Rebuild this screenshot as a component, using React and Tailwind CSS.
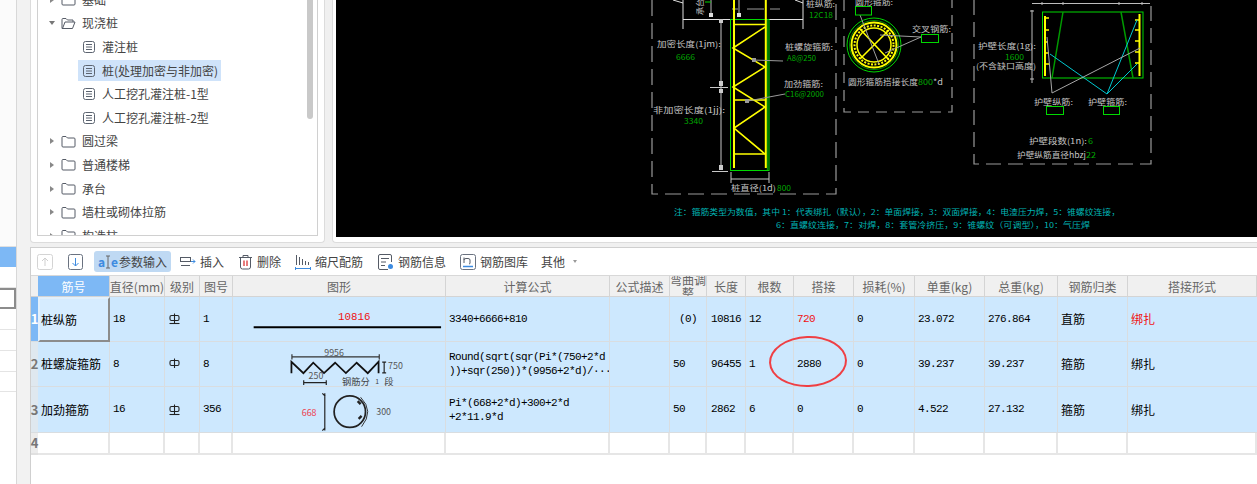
import React from 'react';

const mono = "font-['Liberation_Mono','Noto_Sans_CJK_SC',monospace] text-[11px] tracking-[-0.6px]";
const gridCols = 'grid grid-cols-[7px_72px_55px_35px_33px_213px_164px_60px_37px_39px_48px_60px_61px_70px_73px_70px_1fr]';

const FolderIcon = ({ open }) => (
  <svg width="15" height="13" viewBox="0 0 15 13" fill="none" stroke="#555b66" strokeWidth="1">
    {open ? (
      <path d="M1 11.5V2.5q0-1 1-1h3l1.5 1.5H12V5M1 11.5h10.500L14 5H4L1.500 11.500" />
    ) : (
      <path d="M1 2.500q0-1 1-1h3l1.500 1.500H13q1 0 1 1v7q0 1-1 1H2q-1 0-1-1z" />
    )}
  </svg>
);

const DocIcon = () => (
  <svg width="12" height="12" viewBox="0 0 12 12" fill="none" stroke="#5c6470" strokeWidth="1">
    <rect x="0.500" y="0.500" width="11" height="11" rx="2" />
    <path d="M3 3.500h6M3 6h6M3 8.500h6" />
  </svg>
);

const treeRows = [
  { label: '基础', level: 0, folder: true },
  { label: '现浇桩', level: 0, folder: true, open: true },
  { label: '灌注桩', level: 1 },
  { label: '桩(处理加密与非加密)', level: 1, selected: true },
  { label: '人工挖孔灌注桩-1型', level: 1 },
  { label: '人工挖孔灌注桩-2型', level: 1 },
  { label: '圆过梁', level: 0, folder: true },
  { label: '普通楼梯', level: 0, folder: true },
  { label: '承台', level: 0, folder: true },
  { label: '墙柱或砌体拉筋', level: 0, folder: true },
  { label: '构造柱', level: 0, folder: true },
];

const TreeRow = ({ row }) => {
  if (row.level === 1) {
    return (
      <div className="h-[23.6px] flex items-center pl-[40px]">
        <div className={`flex items-center h-[21px] pl-[5px] pr-[3px] gap-[7px] ${row.selected ? 'bg-[#cfe3fa]' : ''}`}>
          <DocIcon />
          <span className="text-[12px] text-[#444]">{row.label}</span>
        </div>
      </div>
    );
  }
  return (
    <div className="h-[23.6px] flex items-center pl-[11px]">
      <span className="w-[12px] flex items-center">
        {row.open ? (
          <span className="w-0 h-0 border-x-[3px] border-x-transparent border-t-[4px] border-t-[#777]" />
        ) : (
          <span className="w-0 h-0 ml-[1px] border-y-[3px] border-y-transparent border-l-[4px] border-l-[#888]" />
        )}
      </span>
      <FolderIcon open={row.open} />
      <span className="ml-[6px] text-[12px] text-[#444]">{row.label}</span>
    </div>
  );
};

const G = '#00a800';
const BRIGHT = '#00d800';
const Y = '#ffff00';
const W = '#c4c4c4';
const CY = '#00b4b4';

const Label = ({ x, y, fill = W, size = 8, len, children }) => (
  <text x={x} y={y} fill={fill} fontSize={size} textLength={len} lengthAdjust={len ? 'spacingAndGlyphs' : undefined}>
    {children}
  </text>
);

const CadDrawing = () => (
  <svg className="block w-[921px] h-[237px] bg-black" viewBox="336 0 921 237" fill="none">
    {/* dashed frames */}
    <path d="M652 0V194H836V0" stroke="#9a9a9a" strokeWidth="1.200" strokeDasharray="16 7" />
    <path d="M844 0V112H952V0" stroke="#9a9a9a" strokeWidth="1.200" strokeDasharray="11 7" />
    <path d="M974 0V164H1151V0" stroke="#9a9a9a" strokeWidth="1.200" strokeDasharray="15 7" />

    {/* pile elevation */}
    <path d="M683 29V0M803 29V0M683 19.500H803M673 0L683 3M795 0L803 3" stroke="#e0e0e0" />
    <path d="M732 9h6M747 9h17M770 9h10" stroke="#999" />
    <path d="M711 0V15M739 0V15" stroke="#bbb" />
    <rect x="709" y="13" width="4" height="4" fill="#ddd" />
    <rect x="737" y="13" width="4" height="4" fill="#ddd" />
    <path d="M705 2h6" stroke={BRIGHT} />
    <text x="703" y="15" fill={W} fontSize="8" transform="rotate(-90 703 15)">承台</text>
    <rect x="730.500" y="19.500" width="38.500" height="151" stroke={BRIGHT} />
    <path d="M767.500 20V170" stroke="#008a00" strokeWidth="1.500" />
    <path d="M734 0V168M765.800 0V168" stroke={Y} strokeWidth="2" />
    <path d="M734 24.500H765.800M734 100H765.800M734 154H765.800" stroke={Y} strokeWidth="1.500" />
    <path d="M765 27L733 48L765 67L733 87L765 107L734 128L765 154" stroke={Y} strokeWidth="1.600" />
    <path d="M721 20V170M710 87.500H728M712 171.500H728" stroke="#c8c8c8" />
    <rect x="719" y="81" width="4" height="5" fill="#ccc" />
    <rect x="719" y="89" width="4" height="4" fill="#ccc" />
    <rect x="719" y="165" width="4" height="5" fill="#ccc" />
    <rect x="719" y="19" width="4" height="4" fill="#ccc" />
    <path d="M731 172V183M769 172V183M731 179H769" stroke="#c8c8c8" />
    <path d="M753 60L783 61M748 101L785 94" stroke="#9a9a9a" />
    <rect x="752" y="58" width="4" height="4" fill="#9a9a9a" />
    <rect x="745" y="99" width="4" height="4" fill="#9a9a9a" />
    <Label x="657" y="47" len="64">加密长度(1jm):</Label>
    <Label x="676" y="60" fill={G} len="19">6666</Label>
    <Label x="653" y="113" len="72">非加密长度(1jj):</Label>
    <Label x="684" y="124" fill={G} len="19">3340</Label>
    <Label x="806" y="7" len="29">桩纵筋:</Label>
    <Label x="809" y="18" fill={G} len="24">12C18</Label>
    <Label x="785" y="50" len="48">桩螺旋箍筋:</Label>
    <Label x="787" y="61" fill={G} len="29">A8@250</Label>
    <Label x="784" y="87" len="39">加劲箍筋:</Label>
    <Label x="785" y="97" fill={G} len="39">C16@2000</Label>
    <Label x="731" y="191" len="45">桩直径(1d)</Label>
    <Label x="777" y="191" fill={G} len="14">800</Label>

    {/* circular section */}
    <circle cx="874" cy="45" r="27" stroke={BRIGHT} />
    <circle cx="874" cy="45" r="24.500" stroke="#008a00" strokeWidth="1" />
    <circle cx="874" cy="45" r="22.500" stroke={Y} strokeWidth="2" />
    <circle cx="874" cy="45" r="19.500" stroke={Y} strokeWidth="2" strokeDasharray="2 1.500" />
    <circle cx="874" cy="45" r="17" stroke={Y} strokeWidth="1.500" />
    <path d="M859 28L889 60M889 30L860 59" stroke={Y} strokeWidth="1.600" />
    <path d="M860 15L879 64M921 37L880 35M921 37L885 53" stroke="#a0a0a0" />
    <rect x="855.500" y="6.500" width="16" height="8.500" stroke={BRIGHT} />
    <rect x="921.500" y="34.500" width="17" height="8" stroke={BRIGHT} />
    <Label x="855" y="5" len="38">圆形箍筋:</Label>
    <Label x="912" y="32" len="39">交叉钢筋:</Label>
    <Label x="848" y="85" len="70">圆形箍筋搭接长度</Label>
    <Label x="918" y="85" fill={G} len="15">800</Label>
    <Label x="933" y="85" len="10">*d</Label>

    {/* wall section */}
    <path d="M1032 10V83M1030 11H1034M1030 79H1034M1032 3.500H1150M1042 2V5M1063 2V5M1119 2V5M1142 2V5" stroke="#bdbdbd" />
    <rect x="1042.500" y="12" width="100.500" height="66" stroke={BRIGHT} />
    <path d="M1063 12L1052 78M1121 12L1133 78" stroke="#009a00" strokeWidth="1.500" />
    <path d="M1045 16V76M1139.500 14V76" stroke={Y} strokeWidth="2" />
    <path d="M1045 18h4M1045 30h4M1045 42h3M1045 53h4M1045 64h4M1135 20h4M1135 30h4M1135 41h4M1135 52h4M1135 63h4" stroke={Y} strokeWidth="1.500" />
    <path d="M1107 94L1050 54M1107 94L1137 20M1107 94L1137 64" stroke="#00c8d0" />
    <path d="M1052 93L1140 48M1052 93L1047 37" stroke="#a8a8a8" />
    <rect x="1046.500" y="106.500" width="17" height="8" stroke={BRIGHT} />
    <rect x="1103.500" y="106.500" width="16" height="8" stroke={BRIGHT} />
    <Label x="978" y="49" len="58">护壁长度(1g):</Label>
    <Label x="1005" y="60" fill={G} len="19">1600</Label>
    <Label x="976" y="69" len="60">(不含缺口高度)</Label>
    <Label x="1034" y="105" len="39">护壁纵筋:</Label>
    <Label x="1088" y="105" len="39">护壁箍筋:</Label>
    <Label x="1029" y="144" len="58">护壁段数(1n):</Label>
    <Label x="1088" y="144" fill={G} len="5">6</Label>
    <Label x="1017" y="158" len="69">护壁纵筋直径hbzj</Label>
    <Label x="1086" y="158" fill={G} len="10">22</Label>

    {/* notes */}
    <Label x="674" y="215" fill={CY} len="446">注：箍筋类型为数值，其中 1：代表绑扎（默认），2：单面焊接，3：双面焊接，4：电渣压力焊，5：锥螺纹连接，</Label>
    <Label x="776" y="228" fill={CY} len="314">6：直螺纹连接，7：对焊，8：套管冷挤压，9：锥螺纹（可调型），10：气压焊</Label>
  </svg>
);

const ToolIcon = ({ children, w = 16 }) => (
  <svg width={w} height="16" viewBox={`0 0 ${w} 16`} fill="none" strokeWidth="1">
    {children}
  </svg>
);

const ToolButton = ({ icon, label, className = '' }) => (
  <div className={`flex items-center gap-[4px] text-[12px] text-[#444] ${className}`}>
    {icon}
    <span>{label}</span>
  </div>
);

const Toolbar = () => (
  <div className="h-[28px] flex items-center bg-white border-b border-[#d8d8d8] pl-[6px]">
    <ToolIcon>
      <rect x="0.500" y="0.500" width="15" height="15" rx="2" stroke="#d4d4d4" />
      <path d="M8 12V4M5 7l3-3 3 3" stroke="#cfcfcf" />
    </ToolIcon>
    <div className="ml-[15px] flex">
      <ToolIcon w={15}>
        <rect x="0.500" y="0.500" width="14" height="15" rx="2" stroke="#6a7280" />
        <path d="M7.500 4V12M4.500 9l3 3 3-3" stroke="#3d8be0" />
      </ToolIcon>
    </div>
    <div className="ml-[11px] h-[21px] w-[77px] bg-[#bfd9f3] rounded-[3px] flex items-center pl-[4px] gap-[4px] text-[12px] text-[#444]">
      <span className="flex items-center w-[17px] text-[12px] font-bold text-[#3d8be0] leading-none">
        a
        <svg width="6" height="14" viewBox="0 0 6 14" fill="none" stroke="#666" className="shrink-0">
          <path d="M1 1h4M3 1v12M1 13h4" />
        </svg>
        e
      </span>
      <span>参数输入</span>
    </div>
    <ToolButton
      className="ml-[9px]"
      label="插入"
      icon={
        <ToolIcon>
          <rect x="0.500" y="3.500" width="10" height="4" stroke="#555b66" />
          <path d="M1 11.500H10" stroke="#555b66" />
          <path d="M11 7.500h4M13 5.500l2 2-2 2" stroke="#3d8be0" />
        </ToolIcon>
      }
    />
    <ToolButton
      className="ml-[14px]"
      label="删除"
      icon={
        <ToolIcon w={15}>
          <path d="M1 3.500H14M5 3.500V1.500h5v2M2.500 3.500V13q0 2 2 2h6q2 0 2-2V3.500" stroke="#555b66" />
          <path d="M6 6.500V12M9 6.500V12" stroke="#e05050" strokeWidth="1.500" />
        </ToolIcon>
      }
    />
    <ToolButton
      className="ml-[14px]"
      label="缩尺配筋"
      icon={
        <ToolIcon>
          <path d="M1.500 1V11M4.500 3V11M7.500 5V11M10.500 7V11M13.500 8V11" stroke="#555b66" />
          <path d="M0.500 14.500H15.500M0.500 13v3M15.500 13v3" stroke="#3d8be0" />
        </ToolIcon>
      }
    />
    <ToolButton
      className="ml-[15px]"
      label="钢筋信息"
      icon={
        <ToolIcon>
          <path d="M10 15.500H2q-1.500 0-1.500-1.500V2Q0.500 0.500 2 0.500h10q1.500 0 1.500 1.500v6" stroke="#555b66" />
          <path d="M3 4.500h8M3 8h5M3 11.500h4" stroke="#555b66" />
          <circle cx="12.500" cy="12.500" r="2.500" fill="#3d8be0" />
        </ToolIcon>
      }
    />
    <ToolButton
      className="ml-[14px]"
      label="钢筋图库"
      icon={
        <ToolIcon>
          <rect x="0.500" y="0.500" width="15" height="15" rx="2" stroke="#6a7280" />
          <path d="M4 3.500V9M4 6q0-1.500 2-1.500h2q2 0 2 1.500v3q0 1-1 1" stroke="#555b66" />
          <path d="M3 12.500H13" stroke="#3d8be0" strokeWidth="1.500" />
        </ToolIcon>
      }
    />
    <div className="ml-[13px] flex items-center text-[12px] text-[#444]">
      <span>其他</span>
      <span className="ml-[8px] w-0 h-0 border-x-[2.500px] border-x-transparent border-t-[3px] border-t-[#999]" />
    </div>
  </div>
);

const headers = ['筋号', '直径(mm)', '级别', '图号', '图形', '计算公式', '公式描述', '弯曲调整', '长度', '根数', '搭接', '损耗(%)', '单重(kg)', '总重(kg)', '钢筋归类', '搭接形式'];

const GradeMark = ({ base }) => (
  <svg width="11" height="12" viewBox="0 0 11 12" fill="none" stroke="#222" strokeWidth="1.100">
    <rect x="1" y="2.500" width="9" height="5" rx="1.500" />
    <path d="M5.500 0.500V10" />
    {base && <path d="M0.500 10.500H10.500" />}
  </svg>
);

const Shape1 = () => (
  <svg className="block" width="213" height="45" viewBox="233 297 213 45" fill="none">
    <text x="337" y="320" fill="#f01010" fontSize="11" fontFamily="Liberation Mono">10816</text>
    <path d="M251 327.500H442" stroke="#000" strokeWidth="2" />
  </svg>
);

const Shape2 = () => (
  <svg className="block" width="213" height="45" viewBox="233 342 213 45" fill="none">
    <path d="M290 356.700H379M290 354V359.500M379 354V359.500" stroke="#333" strokeWidth="1.200" />
    <text x="323" y="356" fill="#555" fontSize="9">9956</text>
    <path d="M289.500 373.500V361.700L301.700 373.300L311.700 362.700L322.700 373.300L334 362.700L345 373.300L356 362.700L367.300 373.300L378.300 361.700V373.500" stroke="#111" strokeWidth="1.800" />
    <path d="M384 362V373M382 362H386M382 373H386" stroke="#222" strokeWidth="1.200" />
    <text x="388" y="369.500" fill="#555" fontSize="9">750</text>
    <path d="M302 383H325M302 380.500V385.500M325 380.500V385.500" stroke="#222" strokeWidth="1.200" />
    <text x="307" y="379" fill="#555" fontSize="9">250</text>
    <text x="341" y="385.500" fill="#444" fontSize="9.500">钢筋分</text>
    <text x="375" y="384" fill="#444" fontSize="7">1</text>
    <text x="384" y="385.500" fill="#444" fontSize="9.500">段</text>
  </svg>
);

const Shape3 = () => (
  <svg className="block" width="213" height="46" viewBox="233 387 213 46" fill="none">
    <path d="M323.500 393V431M321 393L324 396M321 431L324 428" stroke="#222" strokeWidth="1.200" />
    <text x="300" y="416" fill="#ee3b4b" fontSize="9">668</text>
    <circle cx="349" cy="411.700" r="16" stroke="#222" strokeWidth="1.800" />
    <path d="M357 401l3 3M358 419l3-3" stroke="#222" strokeWidth="2.400" />
    <path d="M360 397Q374 411 361 427" stroke="#333" />
    <text x="376" y="415" fill="#555" fontSize="9">300</text>
  </svg>
);

const rows = [
  {
    no: '1', name: '桩纵筋', dia: '18', base: true, fig: '1', shape: <Shape1 />, formula: ['3340+6666+810'],
    bend: ' (0)', len: '10816', qty: '12', lap: '720', lapRed: true, loss: '0', unit: '23.072', total: '276.864',
    type: '直筋', form: '绑扎', formRed: true, h: 'h-[45px]',
  },
  {
    no: '2', name: '桩螺旋箍筋', dia: '8', base: false, fig: '8', shape: <Shape2 />, formula: ['Round(sqrt(sqr(Pi*(750+2*d', '))+sqr(250))*(9956+2*d)/···'],
    bend: '50', len: '96455', qty: '1', lap: '2880', loss: '0', unit: '39.237', total: '39.237',
    type: '箍筋', form: '绑扎', h: 'h-[45px]',
  },
  {
    no: '3', name: '加劲箍筋', dia: '16', base: true, fig: '356', shape: <Shape3 />, formula: ['Pi*(668+2*d)+300+2*d', '+2*11.9*d'],
    bend: '50', len: '2862', qty: '6', lap: '0', loss: '0', unit: '4.522', total: '27.132',
    type: '箍筋', form: '绑扎', h: 'h-[46px]',
  },
];

const Cell = ({ children, className = '' }) => (
  <div className={`flex items-center pl-[3px] border-r border-b border-[#d9dde0] overflow-hidden whitespace-pre ${className}`}>
    {children}
  </div>
);

const TableRow = ({ row }) => {
  const first = row.no === '1';
  return (
    <div className={`${gridCols} ${row.h} bg-[#cde8fe] text-black`}>
      <div className={`flex items-center justify-center border-b border-[#d9dde0] text-[13px] font-bold ${first ? 'bg-[#7db8f5] text-white' : 'bg-[#dfe8ef] text-[#777]'}`}>
        {row.no}
      </div>
      {first ? (
        <div className="flex items-center pl-[1px] text-[12px] border-2 border-[#e2f0fc] border-r-[#8c8c8c] border-b-[#8c8c8c] bg-[#d6ecff]">{row.name}</div>
      ) : (
        <Cell className="text-[12px]">{row.name}</Cell>
      )}
      <Cell className={mono}>{row.dia}</Cell>
      <Cell className="pl-[4px]"><GradeMark base={row.base} /></Cell>
      <Cell className={mono}>{row.fig}</Cell>
      <Cell className="pl-0">{row.shape}</Cell>
      <Cell className={`${mono} leading-[14px]`}>
        <div>
          {row.formula.map((line) => (
            <div key={line}>{line}</div>
          ))}
        </div>
      </Cell>
      <Cell />
      <Cell className={mono}>{row.bend}</Cell>
      <Cell className={`${mono} pl-[4px]`}>{row.len}</Cell>
      <Cell className={mono}>{row.qty}</Cell>
      <Cell className={`${mono} ${row.lapRed ? 'text-[#f01010]' : ''}`}>{row.lap}</Cell>
      <Cell className={mono}>{row.loss}</Cell>
      <Cell className={mono}>{row.unit}</Cell>
      <Cell className={mono}>{row.total}</Cell>
      <Cell className="text-[12px]">{row.type}</Cell>
      <Cell className={`text-[12px] border-r-0 ${row.formRed ? 'text-[#f01010]' : ''}`}>{row.form}</Cell>
    </div>
  );
};

const DataTable = () => (
  <div className="relative">
    <div className={`${gridCols} h-[21px] bg-[#f0f0f0] text-[12px] text-[#666]`}>
      <div className="border-b border-[#d0d0d0]" />
      {headers.map((title, i) => (
        <div
          key={title}
          className={`flex items-center justify-center text-center overflow-hidden border-r border-b border-[#d4d4d4] leading-[13px] ${title === '弯曲调整' ? '' : 'whitespace-nowrap'} ${i === 0 ? 'bg-[#7db8f5] text-white' : ''}`}
        >
          {title}
        </div>
      ))}
    </div>
    {rows.map((row) => (
      <TableRow key={row.no} row={row} />
    ))}
    <div className={`${gridCols} h-[20px] bg-white`}>
      <div className="flex items-center justify-center bg-[#ececec] border-b-2 border-[#e0e0e0] text-[13px] font-bold text-[#777]">4</div>
      {headers.map((title) => (
        <div key={title} className="border-r-2 border-b-2 border-[#e6e6e6]" />
      ))}
    </div>
    {/* hand-drawn mark over the lap cell */}
    <div className="absolute left-[738px] top-[60px] w-[78px] h-[51px] rounded-[50%] border-[2.5px] border-[#ef3f44] -rotate-2" />
  </div>
);

const App = () => (
  <div className="w-[1257px] h-[484px] overflow-hidden flex bg-[#f0f0f0] font-['Noto_Sans_CJK_SC','Liberation_Sans',sans-serif]">
    {/* left list edge */}
    <div className="w-[17px] shrink-0 bg-white border-r border-[#d8d8d8]">
      <div className="h-[247px] bg-[#fbfbfb] border-b border-[#e0e0e0]" />
      <div className="h-[20px] bg-[#7db8f5]" />
      <div className="h-[21px] border-b border-[#e4e4e4]" />
      <div className="h-[21px] border-2 border-l-0 border-[#8c8c8c]" />
      <div className="h-[21px] border-b border-[#e4e4e4]" />
      <div className="h-[21px] border-b border-[#e4e4e4]" />
      <div className="h-[21px] border-b border-[#e4e4e4]" />
      <div className="h-[20px] border-b border-[#e4e4e4]" />
    </div>
    <div className="w-[13px] shrink-0 bg-[#f2f2f2]" />

    <div className="flex-1 min-w-0 flex flex-col">
      <div className="h-[243px] shrink-0 flex">
        {/* tree panel */}
        <div className="w-[295px] shrink-0 bg-white border border-t-0 border-[#dcdcdc] rounded-b-[4px] px-[6px] pb-[6px]">
          <div className="relative h-full overflow-hidden border border-t-0 border-[#d0d0d0]">
            <div className="-mt-[12px]">
              {treeRows.map((row) => (
                <TreeRow key={row.label} row={row} />
              ))}
            </div>
            <div className="absolute right-[4px] top-0 w-[6px] h-[119px] rounded-b-[3px] bg-[#c9c9c9]" />
          </div>
        </div>
        <div className="w-[7px] shrink-0" />
        {/* drawing panel */}
        <div className="flex-1 min-w-0 bg-white border-l border-b border-[#dcdcdc] rounded-bl-[4px] pl-[3px]">
          <CadDrawing />
        </div>
      </div>
      <div className="h-[4px] shrink-0" />
      {/* rebar table panel */}
      <div className="flex-1 min-h-0 bg-white border-l border-t border-[#cfcfcf]">
        <Toolbar />
        <DataTable />
      </div>
    </div>
  </div>
);

export default App;
